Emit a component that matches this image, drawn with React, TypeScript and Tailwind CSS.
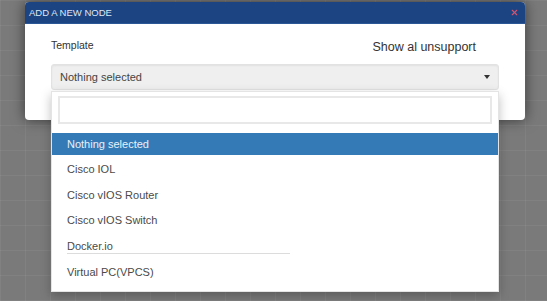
import { X } from 'lucide-react';

const templates = [
  'Nothing selected',
  'Cisco IOL',
  'Cisco vIOS Router',
  'Cisco vIOS Switch',
  'Docker.io',
  'Virtual PC(VPCS)',
];

export default function App() {
  return (
    <div className="relative w-[547px] h-[301px] overflow-hidden bg-[#7a7a7a] bg-[linear-gradient(rgba(255,255,255,0.05)_1px,transparent_1px),linear-gradient(90deg,rgba(255,255,255,0.05)_1px,transparent_1px)] bg-[size:25px_25px] font-['Liberation_Sans',Arial,sans-serif]">
      {/* Modal */}
      <div className="ml-[25px] mt-[2px] w-[500px] rounded-[4px] bg-white shadow-[0_0_14px_rgba(0,0,0,0.55)]">
        {/* Header */}
        <div className="flex h-[22px] items-center justify-between rounded-t-[4px] bg-[#1c4482] border-b border-[#2b5797] pl-[4px] pr-[6px]">
          <span className="text-[9.5px] text-[#dfe7f3] leading-none">ADD A NEW NODE</span>
          <X className="w-[9px] h-[9px] text-[#d9536a]" strokeWidth={3} />
        </div>

        {/* Body */}
        <div className="px-[26px] pt-[14px] pb-[30px]">
          <div className="flex items-center justify-between h-[16px]">
            <span className="text-[10.5px] text-[#333]">Template</span>
            <span className="mr-[23px] mt-[2px] text-[12.5px] text-[#333]">Show al unsupport</span>
          </div>

          <div className="relative mt-[10px]">
            <button className="flex h-[26px] w-full items-center justify-between rounded-[3px] border border-[#e2e2e2] bg-[#efefef] pl-[8px] pr-[8px] shadow-[inset_0_1px_2px_rgba(0,0,0,0.06)]">
              <span className="text-[11px] text-[#444]">Nothing selected</span>
              <svg className="w-[6px] h-[4px]" viewBox="0 0 6 4">
                <path d="M0 0H6L3 4Z" fill="#333" />
              </svg>
            </button>

            {/* Dropdown menu */}
            <div className="absolute left-0 right-0 top-[calc(100%+1px)] z-10 h-[201px] border border-[#e4e4e4] bg-white shadow-[0_4px_10px_rgba(0,0,0,0.25)]">
              <div className="px-[6px] pt-[4px] pb-[7px]">
                <div className="h-[28px] w-full border-2 border-[#e8e8e8] bg-white" />
              </div>
              <ul>
                {templates.map((t, i) => (
                  <li key={t} className="flex h-[25.6px] items-center">
                    <div
                      className={
                        i === 0
                          ? 'flex h-[22px] w-full items-center bg-[#337ab7] px-[15px] text-[11px] text-[#e9f1fa]'
                          : 'flex h-[22px] w-full items-center px-[15px] text-[11px] text-[#4a4a4a]'
                      }
                    >
                      {t === 'Docker.io' ? (
                        <span className="inline-block w-[223px] border-b border-[#dcdcdc] leading-[13px] mt-[2px]">{t}</span>
                      ) : (
                        t
                      )}
                    </div>
                  </li>
                ))}
              </ul>
            </div>
          </div>
        </div>
      </div>
    </div>
  );
}
